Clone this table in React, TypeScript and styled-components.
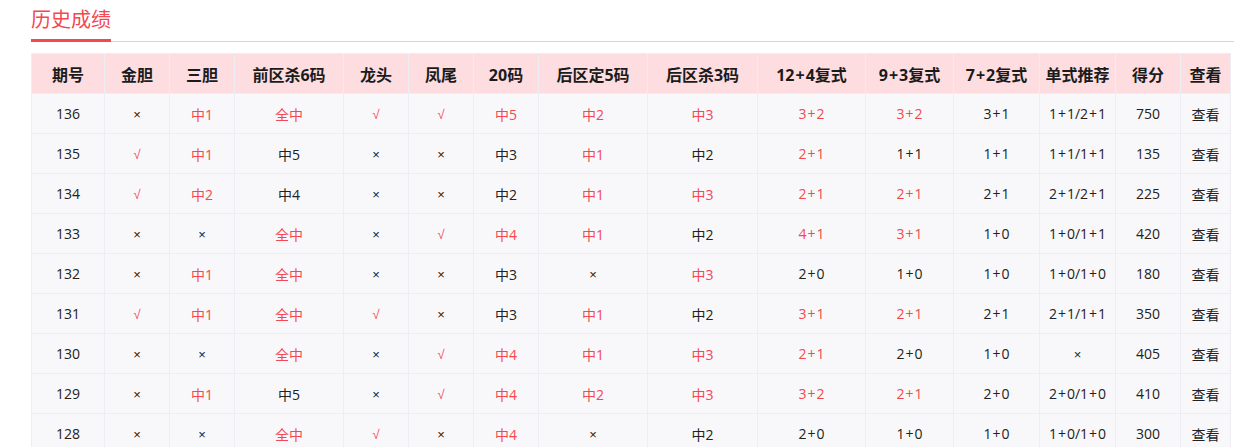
import React from 'react';
import styled, { createGlobalStyle } from 'styled-components';

const GlobalStyle = createGlobalStyle`
	html, body {
		margin: 0;
		padding: 0;
		background: #fff;
		font-family: "Open Sans", "Noto Sans CJK SC", sans-serif;
	}
`;

type Row = {
	issue: string;
	cells: string[];
	score: string;
};

// a leading "!" marks a hit (drawn in red)
const rows: Row[] = [
	{ issue: '136', cells: ['×', '!中1', '!全中', '!√', '!√', '!中5', '!中2', '!中3', '!3+2', '!3+2', '3+1', '1+1/2+1'], score: '750' },
	{ issue: '135', cells: ['!√', '!中1', '中5', '×', '×', '中3', '!中1', '中2', '!2+1', '1+1', '1+1', '1+1/1+1'], score: '135' },
	{ issue: '134', cells: ['!√', '!中2', '中4', '×', '×', '中2', '!中1', '!中3', '!2+1', '!2+1', '2+1', '2+1/2+1'], score: '225' },
	{ issue: '133', cells: ['×', '×', '!全中', '×', '!√', '!中4', '!中1', '中2', '!4+1', '!3+1', '1+0', '1+0/1+1'], score: '420' },
	{ issue: '132', cells: ['×', '!中1', '!全中', '×', '×', '中3', '×', '!中3', '2+0', '1+0', '1+0', '1+0/1+0'], score: '180' },
	{ issue: '131', cells: ['!√', '!中1', '!全中', '!√', '×', '中3', '!中1', '中2', '!3+1', '!2+1', '2+1', '2+1/1+1'], score: '350' },
	{ issue: '130', cells: ['×', '×', '!全中', '×', '!√', '!中4', '!中1', '!中3', '!2+1', '2+0', '1+0', '×'], score: '405' },
	{ issue: '129', cells: ['×', '!中1', '中5', '×', '!√', '!中4', '!中2', '!中3', '!3+2', '!2+1', '2+0', '2+0/1+0'], score: '410' },
	{ issue: '128', cells: ['×', '×', '!全中', '!√', '×', '!中4', '×', '中2', '2+0', '1+0', '1+0', '1+0/1+0'], score: '300' },
];

const columns = [
	{ title: '期号', width: 73 },
	{ title: '金胆', width: 65 },
	{ title: '三胆', width: 65 },
	{ title: '前区杀6码', width: 109 },
	{ title: '龙头', width: 65 },
	{ title: '凤尾', width: 65 },
	{ title: '20码', width: 65 },
	{ title: '后区定5码', width: 109 },
	{ title: '后区杀3码', width: 110 },
	{ title: '12+4复式', width: 108 },
	{ title: '9+3复式', width: 88 },
	{ title: '7+2复式', width: 86 },
	{ title: '单式推荐', width: 76 },
	{ title: '得分', width: 65 },
	{ title: '查看', width: 50 },
];

// plus signs sit a little looser in the original font
const withPlus = (v: string) =>
	v.split(/(\+)/).map((part, i) => (part === '+' ? <Plus key={i}>+</Plus> : part));

const renderValue = (v: string) => {
	if (v === '√' || v === '×') return <Mark>{v}</Mark>;
	if (v.includes('+')) return withPlus(v);
	return v;
};

const App: React.FC = () => {
	return (
		<Page>
			<GlobalStyle />
			<Header>
				<Title>历史成绩</Title>
			</Header>
			<Table>
				<colgroup>
					{columns.map((c) => (
						<col key={c.title} style={{ width: c.width }} />
					))}
				</colgroup>
				<thead>
					<tr>
						{columns.map((c) => (
							<Th key={c.title}>{withPlus(c.title)}</Th>
						))}
					</tr>
				</thead>
				<tbody>
					{rows.map((r) => (
						<tr key={r.issue}>
							<Td>{r.issue}</Td>
							{r.cells.map((v, i) => {
								const hit = v.startsWith('!');
								return (
									<Td key={i} $hit={hit}>
										{renderValue(hit ? v.slice(1) : v)}
									</Td>
								);
							})}
							<Td>{r.score}</Td>
							<Td>
								<ViewLink>查看</ViewLink>
							</Td>
						</tr>
					))}
				</tbody>
			</Table>
		</Page>
	);
};

const Page = styled.div`
	padding-left: 31px;
`;

const Header = styled.div`
	border-bottom: 1px solid #f6c6ca;
	margin-bottom: 11px;
`;

const Title = styled.div`
	display: inline-block;
	font-family: "Noto Sans CJK SC", sans-serif;
	font-size: 20px;
	line-height: 26px;
	padding-top: 6px;
	padding-bottom: 7px;
	color: #f5474f;
	border-bottom: 3px solid #f5474f;
	margin-bottom: -1px;
`;

const Table = styled.table`
	border-collapse: collapse;
	table-layout: fixed;
	width: 1199px;
`;

const Th = styled.th`
	height: 39px;
	padding: 0;
	background: #fddde0;
	border: 1px solid #eceef4;
	font-size: 16px;
	font-weight: 700;
	color: #1b1b1b;
	text-align: center;
	white-space: nowrap;
`;

const Td = styled.td<{ $hit?: boolean }>`
	height: 39px;
	padding: 0;
	background: #f8f8fa;
	border: 1px solid #eceef4;
	font-size: 14px;
	color: ${(p) => (p.$hit ? '#f5474f' : '#222')};
	text-align: center;
	white-space: nowrap;
`;

const Plus = styled.span`
	margin: 0 1px;
`;

const Mark = styled.span`
	font-family: "Liberation Sans", sans-serif;
	font-size: 13px;
`;

const ViewLink = styled.span`
	font-family: "Noto Sans CJK SC", sans-serif;
	color: #222;
	cursor: pointer;
`;

export default App;
